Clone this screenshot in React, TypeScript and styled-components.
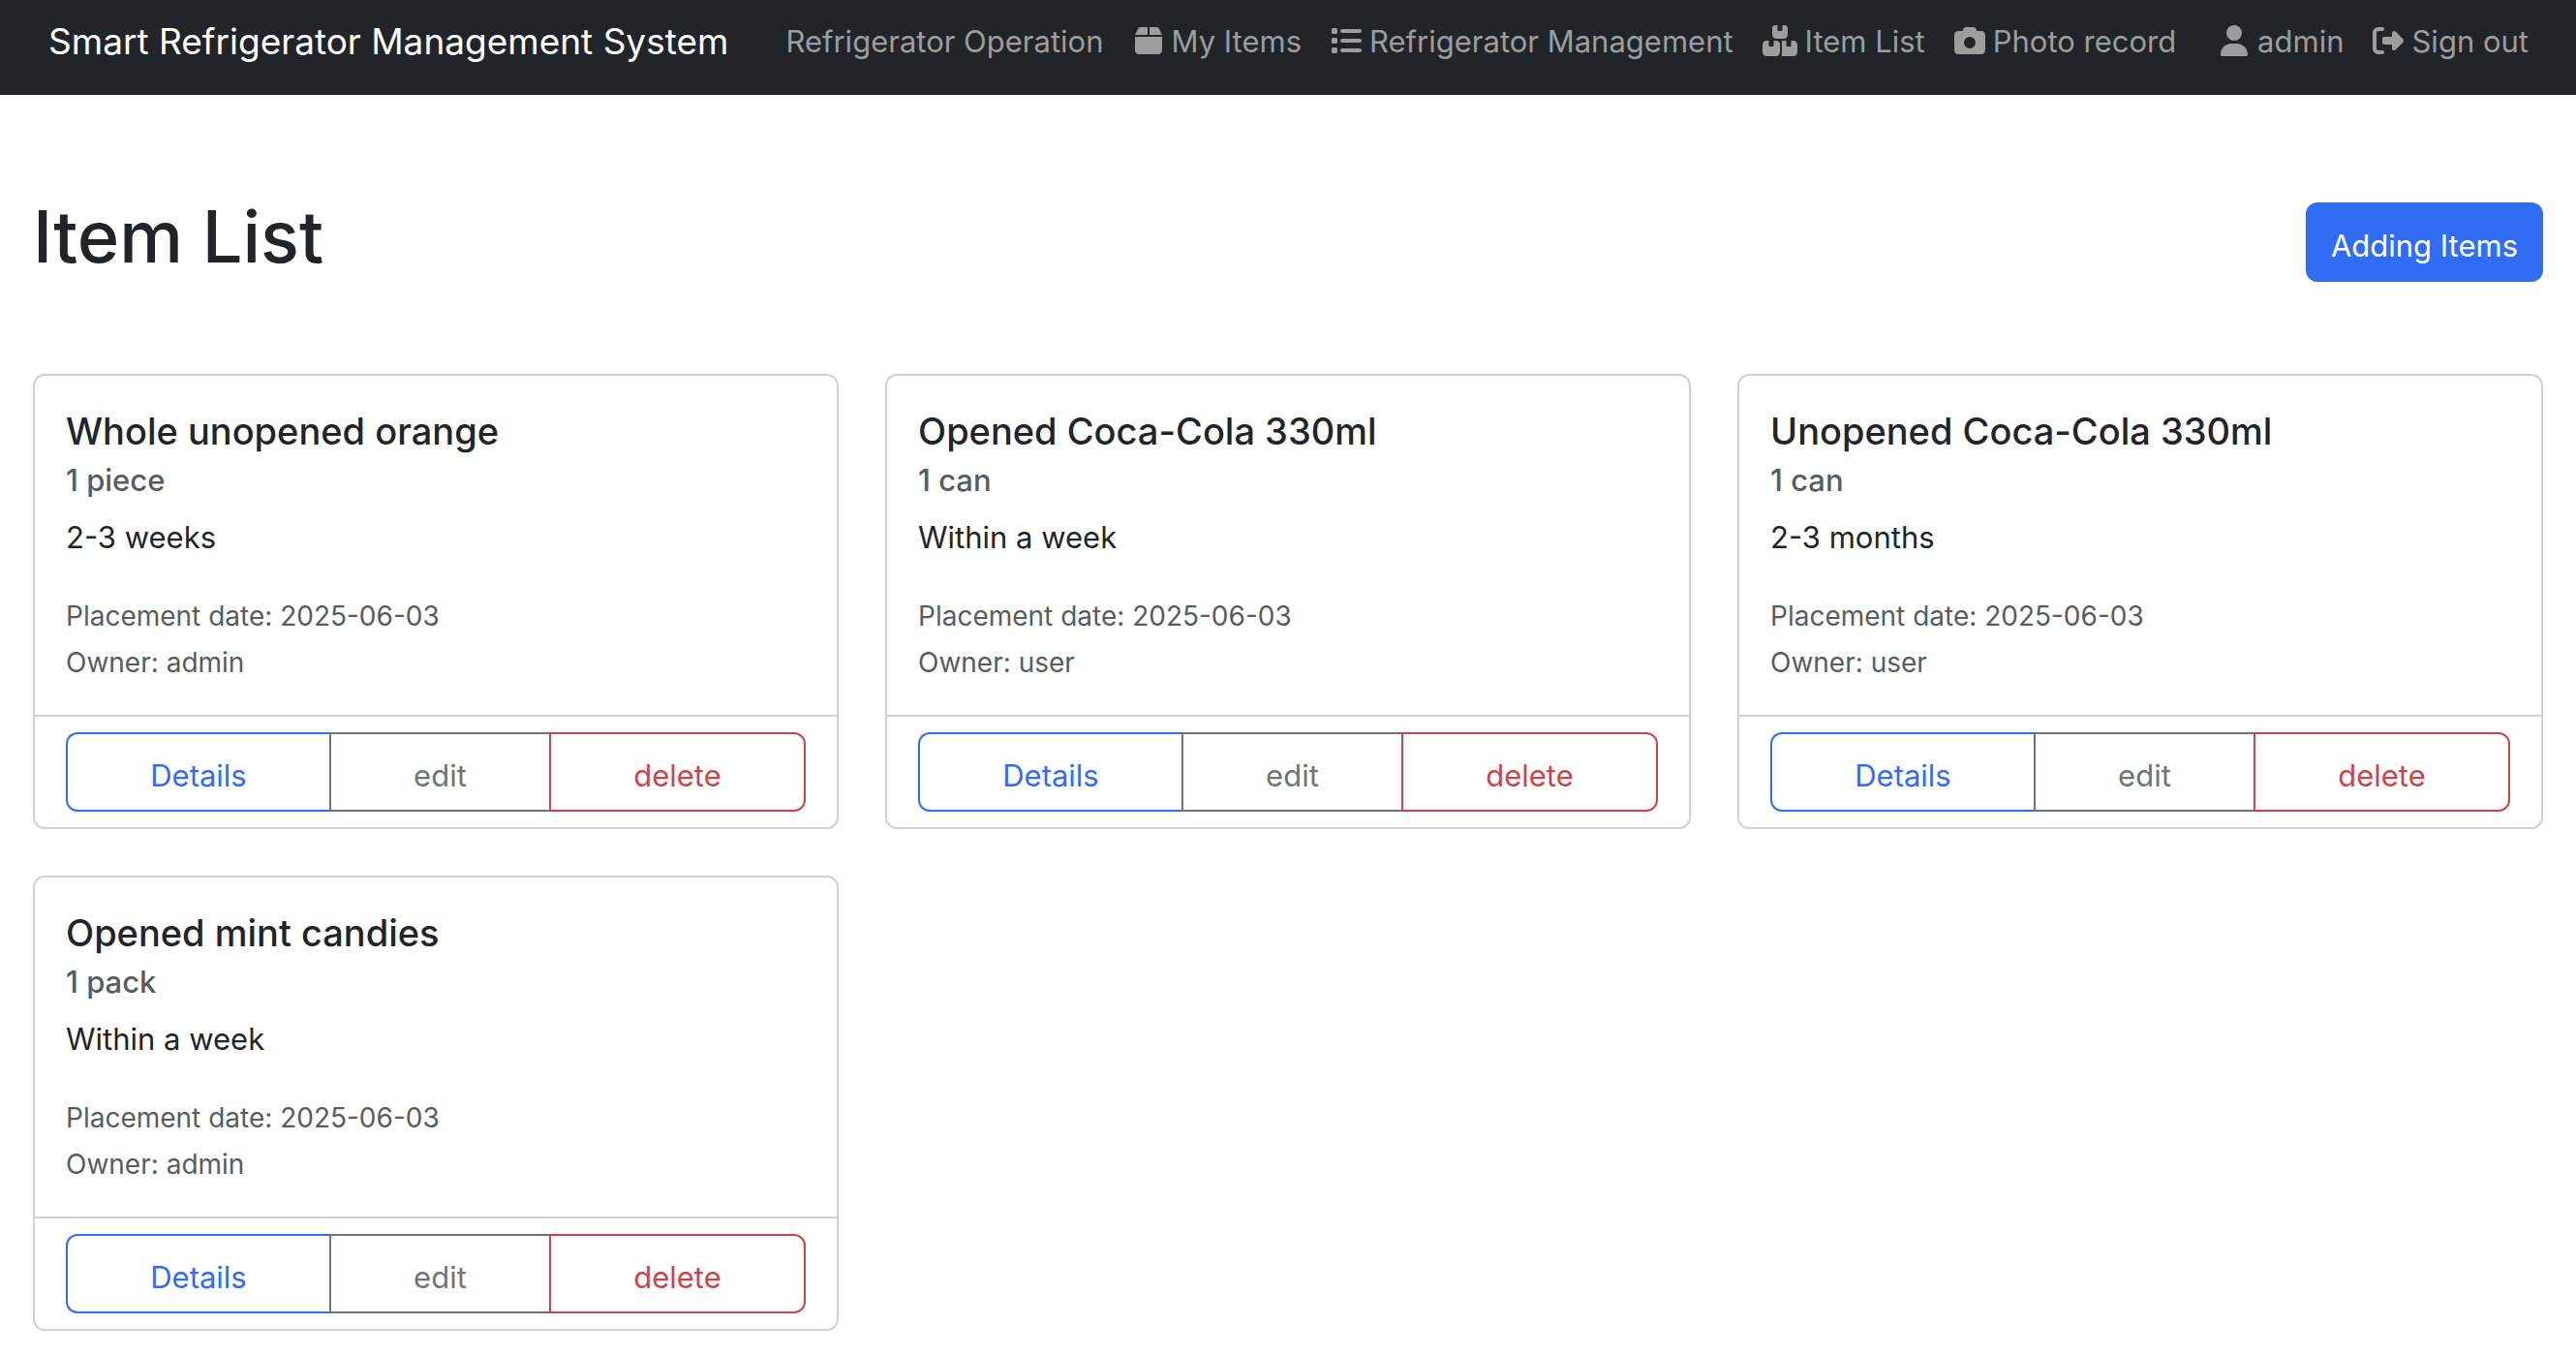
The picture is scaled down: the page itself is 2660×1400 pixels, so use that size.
import React from "react";
import styled, { createGlobalStyle, css } from "styled-components";
import { FaBox, FaCamera, FaList, FaRightFromBracket, FaUser } from "react-icons/fa6";

const ink = "#212529";
const muted = "#585c5f";
const line = "#d0d1d1";
const blue = "#316cf4";
const gray = "#6c757d";
const red = "#cb444a";

const GlobalStyle = createGlobalStyle`
  *, *::before, *::after { box-sizing: border-box; }
  body {
    margin: 0;
    background: #fff;
    color: ${ink};
    font-family: Inter, "Liberation Sans", sans-serif;
    font-size: 31px;
    line-height: 48px;
  }
  h1, h2, h3, p, ul { margin: 0; padding: 0; }
`;

const Navbar = styled.nav`
  display: flex;
  align-items: center;
  padding: 13px 34px 25px;
  background: ${ink};
  white-space: nowrap;
`;

const Brand = styled.a`
  margin: 0 44px 0 16px;
  color: #fff;
  font-size: 37px;
  line-height: 60px;
  text-decoration: none;
`;

const NavList = styled.ul<{ $end?: boolean }>`
  display: flex;
  list-style: none;
  ${({ $end }) => $end && css`margin-left: auto;`}
`;

const NavLink = styled.a`
  display: flex;
  align-items: center;
  gap: 8px;
  padding: 0 15px;
  color: #9b9d9e;
  text-decoration: none;

  svg {
    flex: none;
    width: auto;
    height: 32px;
    margin-bottom: 2px;
  }
`;

const Main = styled.main`
  padding: 96px 34px 24px;
`;

const PageHeader = styled.header`
  display: flex;
  align-items: flex-start;
  justify-content: space-between;
  padding: 15px 0 95px;
`;

const PageTitle = styled.h1`
  font-size: 74px;
  font-weight: 500;
  line-height: 70px;
`;

const buttonText = css`
  padding: 17px 24px 9px;
  border: 2px solid;
  font-family: inherit;
  font-size: 31px;
  line-height: 52px;
  cursor: pointer;
`;

const PrimaryButton = styled.button`
  ${buttonText}
  border-color: ${blue};
  border-radius: 12px;
  background: ${blue};
  color: #fff;
`;

const CardGrid = styled.div`
  display: grid;
  grid-template-columns: repeat(3, minmax(0, 1fr));
  gap: 48px;
`;

const Card = styled.article`
  border: 2px solid ${line};
  border-radius: 12px;
`;

const CardBody = styled.div`
  padding: 32px 32px 30px;
`;

const CardTitle = styled.h2`
  padding-bottom: 2px;
  font-size: 38px;
  font-weight: 500;
  line-height: 50px;
`;

const Quantity = styled.h3`
  color: ${muted};
  font-size: 31px;
  font-weight: 500;
  line-height: 48px;
`;

const ShelfLife = styled.p`
  padding: 11px 0 33px;
`;

const Meta = styled.p`
  color: ${muted};
  font-size: 28px;
`;

const CardFooter = styled.div`
  display: flex;
  padding: 16px 32px;
  border-top: 2px solid ${line};
`;

const ActionButton = styled.button<{ $tone: string }>`
  ${buttonText}
  flex: 1 1 auto;
  border-color: ${({ $tone }) => $tone};
  background: transparent;
  color: ${({ $tone }) => $tone};

  &:first-child {
    border-right: 0;
    border-radius: 12px 0 0 12px;
  }
  &:nth-child(2) {
    border-right: 0;
  }
  &:last-child {
    border-radius: 0 12px 12px 0;
  }
`;

function BoxesIcon() {
  return (
    <svg viewBox="0 0 576 512" fill="currentColor" aria-hidden="true">
      <path d="M248 0H208c-26.5 0-48 21.5-48 48V160c0 35.3 28.7 64 64 64H352c35.3 0 64-28.7 64-64V48c0-26.5-21.5-48-48-48H328V80c0 8.800-7.200 16-16 16H264c-8.800 0-16-7.200-16-16V0zM64 256c-35.300 0-64 28.700-64 64V448c0 35.300 28.700 64 64 64H224c35.300 0 64-28.700 64-64V320c0-35.300-28.700-64-64-64H184v80c0 8.800-7.200 16-16 16H120c-8.800 0-16-7.200-16-16V256H64zM352 512H512c35.300 0 64-28.700 64-64V320c0-35.300-28.700-64-64-64H472v80c0 8.800-7.200 16-16 16H408c-8.800 0-16-7.200-16-16V256H352c-15 0-28.800 5.100-39.700 13.800c4.900 10.400 7.700 22 7.700 34.200V464c0 12.200-2.800 23.800-7.700 34.200C323.200 506.900 337 512 352 512z" />
    </svg>
  );
}

const mainLinks = [
  { label: "Refrigerator Operation" },
  { label: "My Items", Icon: FaBox },
  { label: "Refrigerator Management", Icon: FaList },
  { label: "Item List", Icon: BoxesIcon },
  { label: "Photo record", Icon: FaCamera },
];

const userLinks = [
  { label: "admin", Icon: FaUser },
  { label: "Sign out", Icon: FaRightFromBracket },
];

const items = [
  { name: "Whole unopened orange", quantity: "1 piece", life: "2-3 weeks", date: "2025-06-03", owner: "admin" },
  { name: "Opened Coca-Cola 330ml", quantity: "1 can", life: "Within a week", date: "2025-06-03", owner: "user" },
  { name: "Unopened Coca-Cola 330ml", quantity: "1 can", life: "2-3 months", date: "2025-06-03", owner: "user" },
  { name: "Opened mint candies", quantity: "1 pack", life: "Within a week", date: "2025-06-03", owner: "admin" },
];

type LinkItem = { label: string; Icon?: React.ComponentType };

function Links({ links, end }: { links: LinkItem[]; end?: boolean }) {
  return (
    <NavList $end={end}>
      {links.map(({ label, Icon }) => (
        <li key={label}>
          <NavLink href="#">
            {Icon && <Icon />}
            {label}
          </NavLink>
        </li>
      ))}
    </NavList>
  );
}

export default function App() {
  return (
    <>
      <GlobalStyle />
      <Navbar>
        <Brand href="#">Smart Refrigerator Management System</Brand>
        <Links links={mainLinks} />
        <Links links={userLinks} end />
      </Navbar>
      <Main>
        <PageHeader>
          <PageTitle>Item List</PageTitle>
          <PrimaryButton type="button">Adding Items</PrimaryButton>
        </PageHeader>
        <CardGrid>
          {items.map((item) => (
            <Card key={item.name}>
              <CardBody>
                <CardTitle>{item.name}</CardTitle>
                <Quantity>{item.quantity}</Quantity>
                <ShelfLife>{item.life}</ShelfLife>
                <Meta>Placement date: {item.date}</Meta>
                <Meta>Owner: {item.owner}</Meta>
              </CardBody>
              <CardFooter>
                <ActionButton type="button" $tone={blue}>Details</ActionButton>
                <ActionButton type="button" $tone={gray}>edit</ActionButton>
                <ActionButton type="button" $tone={red}>delete</ActionButton>
              </CardFooter>
            </Card>
          ))}
        </CardGrid>
      </Main>
    </>
  );
}
